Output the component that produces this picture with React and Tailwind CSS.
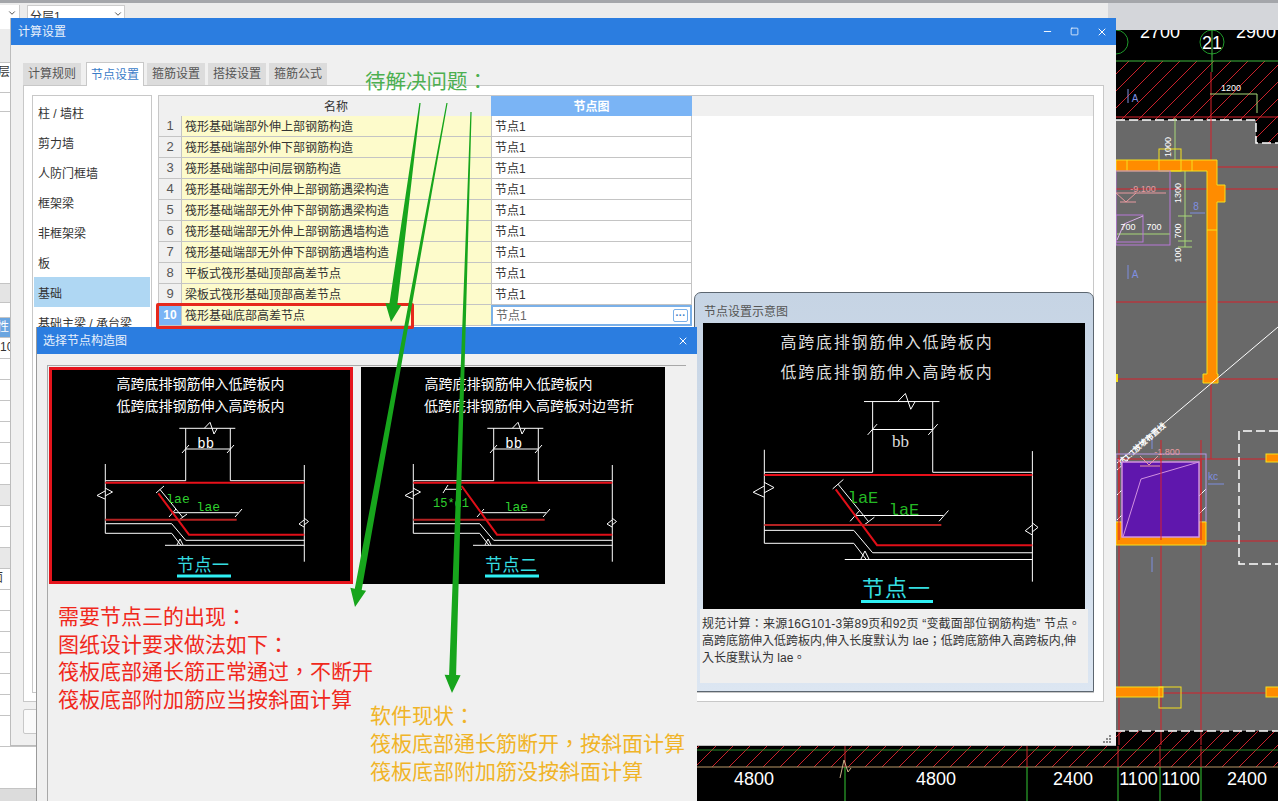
import React from 'react';
import { Minus, Square, X, ChevronDown } from 'lucide-react';

const sideItems = ['柱 / 墙柱', '剪力墙', '人防门框墙', '框架梁', '非框架梁', '板', '基础', '基础主梁 / 承台梁'];
const tabs = ['计算规则', '节点设置', '箍筋设置', '搭接设置', '箍筋公式'];
const rows = [
    '筏形基础端部外伸上部钢筋构造',
    '筏形基础端部外伸下部钢筋构造',
    '筏形基础端部中间层钢筋构造',
    '筏形基础端部无外伸上部钢筋遇梁构造',
    '筏形基础端部无外伸下部钢筋遇梁构造',
    '筏形基础端部无外伸上部钢筋遇墙构造',
    '筏形基础端部无外伸下部钢筋遇墙构造',
    '平板式筏形基础顶部高差节点',
    '梁板式筏形基础顶部高差节点',
    '筏形基础底部高差节点',
];

// strip of the property list left of the dialogs: [height, tint, text]
const stripRows = [
    [33, 'bg-[#ececec]', ''], [30, 'bg-white -indent-[2px]', '层'], [19, 'bg-white', ''], [172, 'bg-white', ''],
    [19, 'bg-[#e4e4e4]', ''], [15, 'bg-white', ''], [20, 'bg-[#6aa5e0] text-white -indent-[3px]', '性'], [21, 'bg-white', '10'],
    [21, 'bg-white', ''], [21, 'bg-white', ''], [21, 'bg-white', ''], [21, 'bg-white', ''], [21, 'bg-white', ''],
    [21, 'bg-white', ''], [21, 'bg-[#e8e8e8]', ''], [21, 'bg-white', ''], [21, 'bg-white', ''],
    [21, 'bg-[#e8e8e8]', ''], [21, 'bg-white -indent-[9px]', '面'], [21, 'bg-white', ''], [21, 'bg-white', ''], [21, 'bg-white', ''],
    [21, 'bg-white', ''], [21, 'bg-white', ''], [21, 'bg-white', ''], [31, 'bg-white', ''], [42, 'bg-white', ''],
    [23, 'bg-[#dcdcdc]', ''],
];

const Line = (props) => <path fill="none" stroke="#fff" strokeWidth="1" vectorEffect="non-scaling-stroke" {...props} />;

// the section drawing shared by the node thumbnails and the big preview
const SectionLines = ({ second }) => (
    <>
        <Line d="M130.3 61.3H186.3M136.7 61.3V113.7H56.3M181.3 61.3V113.7H255.3M56.3 97V166.3M255.3 98V194.7" />
        <Line d="M155.3 61.3L161 55.3L165 67L168.3 61.3" />
        <Line d="M136.7 82H181.3M133 86L140 78M178 86L185 78" />
        <Line d="M56 121L63.5 125L56 129M56 124L48 128.5L56 132" />
        <Line d="M255 151L259.5 154.5L255 158M255 153L250 157L255 160" />
        <Line d="M56.3 156.7H122.7L136.7 173.3H255.3M56.3 166.3H122.7L132 178.3M116 178.3H255.3M128 178L131 172L134 178" />
        <Line d="M123.7 145.7H189.3M120 150L127 142M186 150L193 142" />
        {second
            ? <Line d="M88 122.3H104.7M86 126L91 118" />
            : <Line d="M111 122.5L133.5 150M107 126L115 119M130 153L138 147" />}
        <path d="M56.3 115.7H255.3" fill="none" stroke="#e8101a" strokeWidth="2" vectorEffect="non-scaling-stroke" />
        <path d="M56.3 152.7H187.7" fill="none" stroke="#b42222" strokeWidth="2" vectorEffect="non-scaling-stroke" />
        <path d={second ? 'M104.7 119L140 167.7H255.3' : 'M109.3 126.3L140 167.7H255.3'} fill="none" stroke="#e00f18" strokeWidth="2" vectorEffect="non-scaling-stroke" />
    </>
);

const NodeThumb = ({ second }) => {
    const shift = second ? -4 : 0;
    return (
        <div className={`w-[304px] h-[217px] bg-black shrink-0 ${second ? '' : 'outline-[3px] -outline-offset-[3px] outline-[#e5141c]'}`}>
            <svg width="304" height="217" viewBox="0 0 304 217" className="block">
                <g transform={`translate(${shift} 0)`}><SectionLines second={second} /></g>
                <text x={second ? 147.5 : 151.5} y="22" fill="#fff" fontSize="14" textAnchor="middle">高跨底排钢筋伸入低跨板内</text>
                <text x={second ? 168 : 151.5} y="44" fill="#fff" fontSize="14" textAnchor="middle">{second ? '低跨底排钢筋伸入高跨板对边弯折' : '低跨底排钢筋伸入高跨板内'}</text>
                <text x={156.7 + shift} y="81" fill="#fff" fontSize="14" fontFamily="Liberation Mono" textAnchor="middle">bb</text>
                {second
                    ? <text x="90" y="140" fill="#2fd02f" fontSize="12" fontFamily="Liberation Mono" textAnchor="middle">15*d1</text>
                    : <text x="129" y="136" fill="#2fd02f" fontSize="13" fontFamily="Liberation Mono" textAnchor="middle">lae</text>}
                <text x={159.3 + shift} y="144" fill="#2fd02f" fontSize="13" fontFamily="Liberation Mono" textAnchor="middle">lae</text>
                <text x={154.3 + shift} y="204" fill="#35dde0" fontSize="17" letterSpacing="0.5" textAnchor="middle">{second ? '节点二' : '节点一'}</text>
                <path d={`M${128 + shift} 209H${182 + shift}`} stroke="#2ff0f4" strokeWidth="3" />
            </svg>
        </div>
    );
};

const PreviewDrawing = () => (
    <div className="mx-[8px] w-[382px] h-[286px] bg-black shrink-0">
        <svg width="382" height="286" viewBox="0 0 382 286" className="block">
            <g transform="translate(-14.5 -4.2) scale(1.347 1.35)"><SectionLines /></g>
            <text x="184" y="25" fill="#ddd" fontSize="16" letterSpacing="1.75" textAnchor="middle">高跨底排钢筋伸入低跨板内</text>
            <text x="184" y="55" fill="#ddd" fontSize="16" letterSpacing="1.75" textAnchor="middle">低跨底排钢筋伸入高跨板内</text>
            <text x="197.5" y="124" fill="#ddd" fontSize="17" fontFamily="Liberation Serif" textAnchor="middle">bb</text>
            <text x="160" y="180" fill="#24b824" fontSize="17" fontFamily="Liberation Mono" textAnchor="middle">laE</text>
            <text x="201" y="192" fill="#24b824" fontSize="17" fontFamily="Liberation Mono" textAnchor="middle">laE</text>
            <text x="193.5" y="273" fill="#35dde0" fontSize="22" letterSpacing="1" textAnchor="middle">节点一</text>
            <path d="M158 278.5H230" stroke="#2ff0f4" strokeWidth="3" />
        </svg>
    </div>
);

// CAD model behind the dialogs, drawn in page coordinates
const CadCanvas = () => (
    <svg width="1242" height="771" viewBox="36 30 1242 771" className="block shrink-0">
        <defs>
            <pattern id="hatch" width="17" height="17" patternUnits="userSpaceOnUse">
                <path d="M-1 18L18 -1" stroke="#c9222b" strokeWidth="1" />
            </pattern>
        </defs>
        <rect x="36" y="30" width="1242" height="771" fill="#000" />
        <rect x="36" y="120" width="1242" height="611" fill="#696969" />
        <rect x="36" y="61" width="1242" height="59" fill="url(#hatch)" />
        <rect x="1256" y="120" width="22" height="23" fill="#000" />
        <rect x="1256" y="120" width="22" height="23" fill="url(#hatch)" />
        <rect x="36" y="731" width="1242" height="36" fill="url(#hatch)" />

        {/* top axis */}
        <g fill="#fff" fontSize="18" textAnchor="middle">
            <text x="1160" y="38">2700</text>
            <text x="1256" y="38">2900</text>
            <text x="1212" y="49">21</text>
        </g>
        <circle cx="1212" cy="42" r="12" fill="none" stroke="#1f9a2a" />
        <circle cx="1116" cy="42" r="12" fill="none" stroke="#1f9a2a" />
        <path d="M1116 61H1278M1212 30V72" stroke="#3fb83f" fill="none" />
        <path d="M36 117H1278" stroke="#d8202a" />
        <path d="M1116 120H1256V143H1278" fill="none" stroke="#fff" strokeWidth="1.5" strokeDasharray="9 4" />

        {/* red grid */}
        <g stroke="#d8202a" fill="none">
            <path d="M1211 72V160M1217 167H1278M1116 189H1278M1116 302H1278M1116 379H1278M1211 383V459M1116 459H1278M1206 541H1278" />
            <path d="M1119 440V745M1161 440V745M1201 440V745M1163 693H1278" />
        </g>
        <path d="M1210 94H1257V113M1175 118V160M1185 160V247M1117 234H1170M1178 165H1192M1178 216H1192M1178 241H1192M1178 247H1192" fill="none" stroke="#a8d878" />

        {/* walls */}
        <path d="M1116 160H1217V185H1225V202H1217V374H1218V383H1203V374H1207V171H1116Z" fill="#ff8c00" stroke="#f5e11e" />
        <rect x="1159" y="149" width="22" height="22" fill="none" stroke="#f5e11e" />
        <path d="M1207 230H1217M1127 160V171M1192 160V171" stroke="#f5e11e" />
        <rect x="1116" y="374" width="2" height="8" fill="#f5e11e" />

        {/* sump */}
        <rect x="1116" y="171" width="54" height="74" fill="none" stroke="#b878d8" />
        <rect x="1116" y="215" width="27" height="27" fill="none" stroke="#b878d8" />
        <path d="M1117 240L1124 224L1143 216" fill="none" stroke="#d8b0e8" />
        <path d="M1116 193H1166M1116 193L1126 202L1136 193M1120 202H1136" fill="none" stroke="#e89aa0" />
        <text x="1143" y="192" fill="#e89aa0" fontSize="9" textAnchor="middle">-9.100</text>

        {/* small dimensions */}
        <g fill="#fff" fontSize="9" textAnchor="middle">
            <text x="1231" y="91">1200</text>
            <text x="1128" y="230">700</text>
            <text x="1154" y="230">700</text>
            <text transform="rotate(-90 1171 147)" x="1171" y="147">1000</text>
            <text transform="rotate(-90 1181 193)" x="1181" y="193">1300</text>
            <text transform="rotate(-90 1181 231)" x="1181" y="231">700</text>
            <text transform="rotate(-90 1181 255)" x="1181" y="255">100</text>
        </g>
        <g fill="#7f8fe0" fontSize="10" textAnchor="middle">
            <text x="1135" y="102">A</text>
            <text x="1135" y="278">A</text>
            <text x="1196" y="210">8</text>
            <text x="1213" y="480">kc</text>
        </g>
        <path d="M1128 89V103M1128 265V279M1190 213H1205M1208 484H1224M1152 436V449M1152 557V572" fill="none" stroke="#7f8fe0" />

        {/* slope line */}
        <path d="M1278 327L1117 463" stroke="#fff" fill="none" />
        <text transform="rotate(-41 1150 438)" x="1140" y="440" fill="#fff" fontSize="8" fontWeight="700" textAnchor="middle">坑1:1放坡布置线</text>
        <path d="M1117 470L1128 460M1117 495L1150 462M1117 520L1122 515M1198 497L1206 489M1198 530L1206 522M1198 515L1206 507" stroke="#fff" fill="none" />

        {/* purple pit */}
        <rect x="1116" y="454" width="90" height="68" fill="none" stroke="#b898e8" />
        <path d="M1116 522H1122V537H1199V522H1206V545H1116Z" fill="#ff8c00" stroke="#f5e11e" />
        <rect x="1122" y="462" width="77" height="75" fill="#5f17ad" stroke="#d090e0" strokeWidth="1.5" />
        <path d="M1123 537L1141 479L1199 462" fill="none" stroke="#d090e0" />
        <path d="M1119 459V540M1161 459V540M1201 459V540" stroke="#d8202a" />
        <text x="1167" y="455" fill="#e89aa0" fontSize="9" textAnchor="middle">-1.800</text>
        <path d="M1140 456L1149 465L1158 456M1140 466H1160" fill="none" stroke="#e89aa0" />

        {/* dashed outline right */}
        <path d="M1278 431H1239V564H1278" fill="none" stroke="#fff" strokeWidth="1.5" strokeDasharray="9 4" />
        <rect x="1266" y="454" width="13" height="8" fill="#ff8c00" stroke="#f5e11e" />

        {/* lower walls */}
        <rect x="1115" y="687" width="48" height="10" fill="#ff8c00" stroke="#f5e11e" />
        <rect x="1159" y="687" width="22" height="21" fill="none" stroke="#f5e11e" />
        <rect x="1266" y="687" width="13" height="10" fill="#ff8c00" stroke="#f5e11e" />
        <path d="M1116 731H1278" stroke="#fff" strokeWidth="1.5" strokeDasharray="9 4" />

        {/* bottom axis */}
        <path d="M697 750H1278" stroke="#2a8a2a" />
        <path d="M697 767H1278" stroke="#b89868" />
        <path d="M845 767V801M1027 767V801M1118 767V801M1160 767V801M1201 767V801" stroke="#35c835" />
        <path d="M845 746V767M1027 746V767M1118 746V767M1160 746V767M1201 746V767" stroke="#c8282c" />
        <path d="M840 778L844 760L848 772L851 768" fill="none" stroke="#c8b088" />
        <g fill="#fff" fontSize="18" textAnchor="middle">
            <text x="754" y="785">4800</text>
            <text x="936" y="785">4800</text>
            <text x="1073" y="785">2400</text>
            <text x="1138.5" y="785">1100</text>
            <text x="1180.5" y="785">1100</text>
            <text x="1247" y="785">2400</text>
        </g>
    </svg>
);

// green marker arrow that widens towards its head
const MarkerArrow = ({ from, to, end, head }) => {
    const dx = to[0] - from[0];
    const dy = to[1] - from[1];
    const len = Math.hypot(dx, dy);
    const ux = dx / len;
    const uy = dy / len;
    const bx = to[0] - ux * 18;
    const by = to[1] - uy * 18;
    const pts = [
        [from[0] - uy * 0.6, from[1] + ux * 0.6],
        [bx - uy * end, by + ux * end],
        [bx - uy * head, by + ux * head],
        to,
        [bx + uy * head, by - ux * head],
        [bx + uy * end, by - ux * end],
        [from[0] + uy * 0.6, from[1] - ux * 0.6],
    ];
    return <polygon points={pts.map((p) => p.join(',')).join(' ')} fill="#17a51c" />;
};

const App = () => {
    return (
        <div className="relative w-[1278px] h-[801px] overflow-hidden bg-white text-[12px] text-[#333] [font-family:'Liberation_Sans','Noto_Sans_CJK_SC',sans-serif]">
            {/* application behind the dialogs */}
            <div className="h-[30px] bg-[#ececec] border-t-[3px] border-[#a4a6aa] flex gap-[7px] pt-[2px]">
                <div className="w-[20px] h-[24px] bg-white border-r border-[#ccc] flex justify-end pt-[3px] pr-[2px]"><ChevronDown size={10} /></div>
                <div className="w-[98px] h-[24px] bg-white border border-[#ccc] pl-[2px] pt-[2px] flex justify-between">分层1<ChevronDown size={10} className="mt-[1px] mr-[1px]" /></div>
                <div className="ml-auto w-[170px] -mt-[2px] bg-[#d4d6da]" />
            </div>
            <div className="flex">
                <div className="w-[36px] shrink-0">
                    {stripRows.map(([h, tint, text], i) => (
                        <div key={i} className={`border-b border-[#c4c4c4] whitespace-nowrap overflow-hidden leading-[19px] ${tint}`} style={{ height: h }}>
                            {text}
                        </div>
                    ))}
                </div>
                <CadCanvas />
            </div>

            {/* 计算设置 */}
            <div className="absolute left-[10px] top-[18px] w-[1106px] h-[728px] flex flex-col bg-[#f0f0f0] border-l border-b border-[#bcbcbc]">
                <div className="h-[27px] shrink-0 bg-[#2b7de0] text-[#e8f0fb] flex items-center justify-between pl-[7px] pr-[8px]">
                    <span>计算设置</span>
                    <div className="flex items-center gap-[17px] text-white">
                        <Minus size={11} strokeWidth={2} />
                        <Square size={9} strokeWidth={2} />
                        <X size={12} strokeWidth={2} />
                    </div>
                </div>
                <div className="flex flex-col flex-1 pl-[12px] pr-[12px]">
                    <div className="h-[40px] flex items-end gap-[3px] relative z-10">
                        {tabs.map((t, i) => (
                            <div
                                key={t}
                                className={i === 1
                                    ? 'w-[58px] h-[24px] ml-[2px] -mb-px bg-white border border-b-0 border-[#c8c8c8] text-[#3a7cc8] flex items-center justify-center'
                                    : 'w-[58px] h-[22px] bg-[#dcdcdc] text-[#555] flex items-center justify-center'}
                            >
                                {t}
                            </div>
                        ))}
                    </div>
                    <div className="h-[617px] bg-white border border-[#c8c8c8] flex gap-[6px] pl-[8px] pt-[9px] pr-[9px] pb-[8px]">
                        <div className="w-[120px] shrink-0 border border-[#c8c8c8] p-px">
                            {sideItems.map((s) => (
                                <div key={s} className={`h-[30px] pl-[4px] pt-[3px] flex items-center ${s === '基础' ? 'bg-[#afd7f3]' : ''}`}>
                                    {s}
                                </div>
                            ))}
                        </div>
                        <div className="flex-1 border border-[#c8c8c8] bg-white">
                            <div className="flex h-[20px] bg-[#f0f0f0]">
                                <div className="w-[22px]" />
                                <div className="w-[310px] pt-px flex items-center justify-center">名称</div>
                                <div className="w-[201px] pt-px bg-[#7ab4f5] text-white font-bold flex items-center justify-center">节点图</div>
                            </div>
                            {rows.map((r, i) => {
                                const active = i === 9;
                                return (
                                    <div key={r} className="flex h-[21px]">
                                        <div className={`w-[22px] flex items-center justify-center border-b border-[#c4c4c4] ${active ? 'bg-[#7ab4f5] text-white font-bold' : 'bg-[#f0f0f0] text-[#555] text-[13px]'}`}>
                                            {i + 1}
                                        </div>
                                        <div className="w-[310px] bg-[#fdfbcb] border-b border-l border-[#c4c4c4] pl-[3px] pt-px flex items-center">{r}</div>
                                        {active ? (
                                            <div className="w-[201px] border-2 border-[#7ab0e8] bg-white pl-[3px] pr-[2px] flex items-center justify-between text-[#666]">
                                                节点1
                                                <span className="w-[15px] h-[13px] border border-[#7ab0e8] rounded-[2px] flex items-center justify-center text-[#3a7cc8] leading-none text-[10px] font-bold">···</span>
                                            </div>
                                        ) : (
                                            <div className="w-[201px] border-b border-x border-[#c4c4c4] pl-[3px] pt-px flex items-center">节点1</div>
                                        )}
                                    </div>
                                );
                            })}
                        </div>
                    </div>
                    <div className="mt-[7px] w-[90px] h-[25px] bg-[#fafafa] border border-[#c8c8c8] rounded-[2px]" />
                </div>
                {/* resize grip */}
                <svg width="10" height="10" viewBox="0 0 10 10" className="absolute right-[3px] bottom-[1px]">
                    <path d="M6 1h2v2h-2zM3 4h2v2h-2zM6 4h2v2h-2zM0 7h2v2h-2zM3 7h2v2h-2zM6 7h2v2h-2z" fill="#8a8a8a" />
                </svg>
            </div>

            {/* 节点设置示意图 */}
            <div className="absolute left-[694px] top-[292px] w-[400px] h-[400px] rounded-t-[7px] border border-[#5c6670] bg-gradient-to-b from-[#c6d4e4] to-[#dce6f2] flex flex-col">
                <div className="h-[30px] pl-[9px] pt-[10px] text-[#555] shrink-0">节点设置示意图</div>
                <PreviewDrawing />
                <div className="mx-[5px] h-[74px] bg-[#efefef] pl-[2px] pt-[7px] leading-[17px] text-[#333] whitespace-nowrap [font-family:'Liberation_Sans','Noto_Sans_CJK_TC',sans-serif]">
                    <div className="tracking-[0.2px]">规范计算：来源16G101-3第89页和92页 “变截面部位钢筋构造” 节点。</div>
                    <div>高跨底筋伸入低跨板内,伸入长度默认为 lae；低跨底筋伸入高跨板内,伸</div>
                    <div>入长度默认为 lae。</div>
                </div>
            </div>

            {/* 选择节点构造图 */}
            <div className="absolute left-[36px] top-[327px] w-[661px] h-[474px] flex flex-col bg-[#f0f0f0] border-l border-[#9a9a9a]">
                <div className="h-[27px] shrink-0 bg-[#2b7de0] text-[#e8f0fb] flex items-center justify-between pl-[6px] pr-[8px]">
                    <span>选择节点构造图</span>
                    <X size={12} strokeWidth={2} className="text-white" />
                </div>
                <div className="flex-1 pl-[10px] pt-[11px] pr-[11px]">
                    <div className="h-full border-l border-t border-[#a8a8a8] pl-px pt-px">
                        <div className="flex gap-[8px]">
                            <NodeThumb />
                            <NodeThumb second />
                        </div>
                        <div className="pl-[9px] pt-[18px] text-[21px] leading-[27.7px] text-[#f0281c] whitespace-nowrap [font-family:'Noto_Sans_CJK_TC',sans-serif]">
                            <div>需要节点三的出现：</div>
                            <div>图纸设计要求做法如下：</div>
                            <div>筏板底部通长筋正常通过，不断开</div>
                            <div>筏板底部附加筋应当按斜面计算</div>
                        </div>
                    </div>
                </div>
            </div>

            {/* annotations laid over the screenshot */}
            <div className="absolute left-[156px] top-[303px] w-[258px] h-[26px] border-[3px] border-[#e6281c] rounded-[2px]" />
            <div className="absolute left-[365px] top-[66px] text-[20.5px] leading-[28px] text-[#4caf50] whitespace-nowrap [font-family:'Noto_Sans_CJK_TC',sans-serif]">待解决问题：</div>
            <div className="absolute left-[370px] top-[700px] text-[21px] leading-[28px] text-[#f0b428] whitespace-nowrap [font-family:'Noto_Sans_CJK_TC',sans-serif]">
                <div>软件现状：</div>
                <div>筏板底部通长筋断开，按斜面计算</div>
                <div>筏板底部附加筋没按斜面计算</div>
            </div>
            <svg width="1278" height="801" viewBox="0 0 1278 801" className="absolute left-0 top-0 pointer-events-none">
                <MarkerArrow from={[420, 103]} to={[391, 322]} end={4} head={8} />
                <MarkerArrow from={[447, 103]} to={[355, 607]} end={3.5} head={8} />
                <MarkerArrow from={[471, 112]} to={[452, 693]} end={3.5} head={8} />
            </svg>
        </div>
    );
};

export default App;
